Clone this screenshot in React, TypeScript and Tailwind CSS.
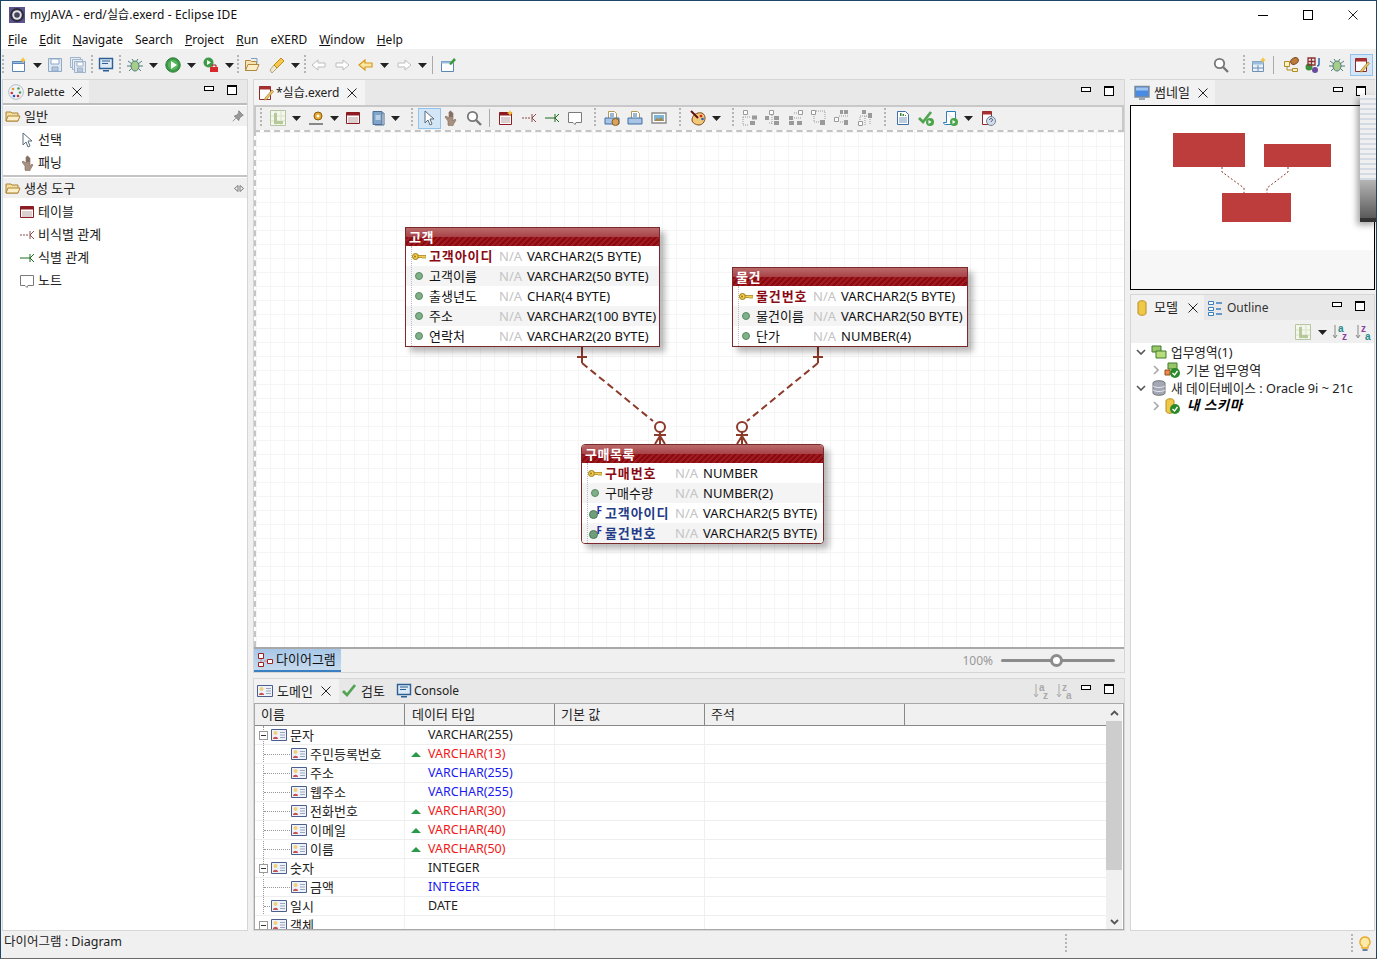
import type { ReactNode } from 'react'

const Dd = ({ className = '' }: { className?: string }) => (
    <svg width="9" height="5" viewBox="0 0 9 5" className={className}><path d="M0 0h9L4.5 5z" fill="#222" /></svg>
)
const Grip = ({ className = '' }: { className?: string }) => (
    <div className={`w-[2px] h-[20px] bg-[repeating-linear-gradient(180deg,#b5b5b5_0,#b5b5b5_2px,transparent_2px,transparent_4px)] ${className}`} />
)
const Ico = ({ className = '', children, s = 16 }: { className?: string; children: ReactNode; s?: number }) => (
    <svg width={s} height={s} viewBox="0 0 16 16" className={`shrink-0 ${className}`}>{children}</svg>
)

const CloseX = ({ className = '' }: { className?: string }) => (
    <svg width="10" height="10" viewBox="0 0 10 10" className={className}><path d="M.5.5l9 9M9.5.5l-9 9" stroke="#222" fill="none" /></svg>
)
const MinMax = ({ className = '' }: { className?: string }) => (
    <div className={`flex items-start gap-[13px] ${className}`}>
        <div className="w-[10px] h-[5px] border border-black bg-white mt-[1px]" />
        <div className="w-[10px] h-[10px] border border-black border-t-2 bg-white" />
    </div>
)

const NewFile = () => <Ico><path d="M1.5 4.5h12v10h-12z" fill="#fff" stroke="#5b87b8" /><path d="M1.5 4.5h12v2h-12z" fill="#9cbcdc" stroke="#5b87b8" /><path d="M12 0l1 2 2 1-2 1-1 2-1-2-2-1 2-1z" fill="#f3c53c" /></Ico>
const Save = ({ c = '#8fa9c9' }: { c?: string }) => <Ico><path d="M1.5 1.5h13v13h-13z" fill="#dfe8f2" stroke={c} /><path d="M4 2h8v5H4z" fill="#fff" stroke={c} /><path d="M5 10h6v4H5z" fill="#b8c8da" stroke={c} /></Ico>
const SaveAll = ({ c = '#9fb3cb' }: { c?: string }) => <Ico><path d="M.5.5h10v10H.5z" fill="#e8eef5" stroke={c} /><path d="M2.500 2.500h10v10h-10z" fill="#e8eef5" stroke={c} /><path d="M4.500 4.500h11v11h-11z" fill="#dfe8f2" stroke={c} /><path d="M7 5h6v4H7z" fill="#fff" stroke={c} /><path d="M7.500 11h5v4h-5z" fill="#b8c8da" stroke={c} /></Ico>
const Monitor = () => <Ico><path d="M1.5 1.5h13v10h-13z" fill="#dce9f5" stroke="#2b5f96" strokeWidth="1.4" /><path d="M4 4h8M4 6.5h6" stroke="#2b5f96" /><path d="M5 13h6v1.5H5z" fill="#2b5f96" /></Ico>
const ThumbI = () => <Ico><path d="M1 1.500h14v10.500H1z" fill="#4a8ae0" stroke="#7a8a9c" strokeWidth="1.400" /><path d="M2 2.500h12v3H2z" fill="#9cc4f0" /><path d="M5 13h6v2H5z" fill="#9aa6b4" /></Ico>
const Bug = () => <Ico><path d="M1 4l4 3M15 4l-4 3M0 9h4M12 9h4M2 14l3-3M14 14l-3-3M5 2l2 3M11 2L9 5" stroke="#4d7f78" fill="none" /><ellipse cx="8" cy="9" rx="4" ry="5" fill="#a8cc8c" stroke="#4d7f78" /></Ico>
const Run = () => <Ico><circle cx="8" cy="8" r="7.2" fill="#3f9a48" stroke="#2a7d3a" /><circle cx="8" cy="8" r="5" fill="#56b65c" /><path d="M6 4l6 4-6 4z" fill="#fff" /></Ico>
const Ext = () => <Ico><circle cx="5.5" cy="5.5" r="5" fill="#3f9a48" /><path d="M4 3l4 2.5L4 8z" fill="#fff" /><path d="M7 10h8v5H7z" fill="#d8282c" /><path d="M9 10V8h4v2" stroke="#a01a1a" fill="none" /></Ico>
const OpenF = () => <Ico><path d="M1.5 13.5v-10h5l1 1h5v9z" fill="#f6e2ae" stroke="#b08a3c" /><path d="M1.5 13.5l2.5-6h11l-2.5 6z" fill="#fbeec9" stroke="#b08a3c" /><path d="M7 1.5h6v5" fill="none" stroke="#7f9fbf" /></Ico>
const Torch = () => <Ico><path d="M1 13l4-5 3 3-5 5z" fill="#efe8d2" stroke="#b7a678" /><path d="M5 8l7-7 3 3-7 7z" fill="#f4c94c" stroke="#c08a18" /></Ico>
const Hollow = ({ flip = false }: { flip?: boolean }) => <Ico><path d={flip ? 'M15 8L9 3v3H2v4h7v3z' : 'M1 8l6-5v3h7v4H7v3z'} fill="#fff" stroke="#bdbdbd" /></Ico>
const ArrL = () => <Ico><path d="M1 8l6-5v3h7v4H7v3z" fill="#fbe7a8" stroke="#d79a1a" strokeWidth="1.2" /></Ico>
const Persp = () => <Ico><path d="M1.5 4.5h12v10h-12z" fill="#fff" stroke="#5b87b8" /><path d="M1.5 4.5h12v2h-12z" fill="#9cbcdc" /><path d="M9 7l5-6 2 2-5 5z" fill="#3a9a3a" /></Ico>
const Cursor = () => <Ico><path d="M3 1v12l3-3 2 5 2-1-2-5h4z" fill="#fff" stroke="#5a6b7c" /></Ico>
const Hand = () => <Ico><path d="M5 15v-4L2 7l1-1 3 2V2h1v5-6h1v6-5h1v5-4h1v8l2-2 1 1-3 5v4z" fill="#a89080" stroke="#7c6658" strokeWidth=".6" /></Ico>
const TableI = () => <Ico><path d="M1.5 2.5h13v11h-13z" fill="#fff" stroke="#8c1c22" /><path d="M1.5 2.5h13v3h-13z" fill="#8c1c22" /><path d="M3 8h10M3 10h10M3 12h10" stroke="#b7a0a0" /></Ico>
const NonId = () => <Ico><path d="M1 8h9" stroke="#8c4a4a" strokeDasharray="2 1" /><path d="M11 4v8M11 8l4-4M11 8l4 4" stroke="#8c4a4a" fill="none" /></Ico>
const IdRel = () => <Ico><path d="M1 8h10" stroke="#1e6a1e" /><path d="M11 4v8M11 8l4-4M11 8l4 4" stroke="#1e6a1e" fill="none" /></Ico>
const Note = () => <Ico><path d="M1.5 2.5h13v10H9l-1 2-2-2H1.5z" fill="#fff" stroke="#7a7a7a" /></Ico>
const PalIco = () => <Ico><circle cx="8" cy="8" r="7.4" fill="#eef2f6" stroke="#b4bfca" /><circle cx="5" cy="5" r="1.3" fill="#e0a030" /><circle cx="10.5" cy="4.5" r="1.3" fill="#52a052" /><circle cx="3.8" cy="9" r="1.3" fill="#c83030" /><circle cx="12" cy="8.5" r="1.3" fill="#52a052" /><circle cx="6" cy="12" r="1.3" fill="#3050c0" /><circle cx="10" cy="12" r="1.3" fill="#c83030" /></Ico>
const Folder = () => <Ico><path d="M1 13V4h5l1 1h6v8z" fill="#f3dca0" stroke="#ac8436" /><path d="M1 13l2-5h12l-2 5z" fill="#fbeec8" stroke="#ac8436" /></Ico>
const Pin = () => <Ico s={12}><path d="M9 1l6 6-2 1-3 3-1 3-6-6 3-1 3-3zM5 11l-4 4" fill="#999" stroke="#777" /></Ico>
const EditPage = () => <Ico><path d="M1.5 1.5h11v13h-11z" fill="#fff" stroke="#8c2a2a" /><path d="M1.5 1.5h11v3h-11z" fill="#a83030" /><path d="M7 13l7-8 1.5 1.5-7 8-2 .5z" fill="#ecc66a" stroke="#a67b2a" strokeWidth=".7" /></Ico>
const LGrid = ({ dim = true }: { dim?: boolean }) => <Ico><path d="M.5.5h15v15H.5z" fill="#f4f8ec" stroke={dim ? '#b6c5a4' : '#7e9a5c'} /><path d="M6 1v14M11 1v14M1 6h14M1 11h14" stroke="#d7e2c8" /><path d="M4 3h3v8h6v3H4z" fill="#b7c89b" /></Ico>
const GearI = () => <Ico><path d="M1 14h14" stroke="#666" strokeWidth="1.5" /><path d="M1 9h6v4H1z" fill="#eee" /><circle cx="10" cy="6" r="4" fill="#e6a92c" stroke="#8a5a14" /><circle cx="10" cy="6" r="1.5" fill="#fff" /></Ico>
const Book = () => <Ico><path d="M3 1.5h9v13H3z" fill="#7fa3c9" stroke="#4d6e92" /><path d="M5.5 5h5v5h-5z" fill="#b9d0e6" /><path d="M12 3h2v12H5v-1" fill="none" stroke="#4d6e92" /></Ico>
const Mag = ({ s = 16 }: { s?: number }) => <Ico s={s}><circle cx="6.5" cy="6.5" r="4.7" fill="#fff" stroke="#777" strokeWidth="1.8" /><path d="M10 10l5 5" stroke="#777" strokeWidth="2.4" /></Ico>
const TableNew = () => <Ico><path d="M1.5 2.5h12v12h-12z" fill="#fff" stroke="#8c1c22" /><path d="M1.5 2.5h12v3h-12z" fill="#8c1c22" /><path d="M3 8h9M3 10h9M3 12h9" stroke="#b7a0a0" /><path d="M12 0l1 2 2 1-2 1-1 2-1-2-2-1 2-1z" fill="#f3c53c" /></Ico>
const Printer = ({ gear = false }: { gear?: boolean }) => <Ico><path d="M4.5 1.5h6l2 2v5h-8z" fill="#fff" stroke="#b49a52" /><path d="M1 8h14v6H1z" fill="#a9c4e4" stroke="#3f6fa5" /><path d="M6 4h4M6 6h4" stroke="#3f6fa5" />{gear && <circle cx="11.5" cy="12" r="3.5" fill="#d9a35a" stroke="#8a5a24" />}</Ico>
const ImgI = () => <Ico><path d="M1 3h14v10H1z" fill="#fff" stroke="#8a8a8a" strokeWidth="1.4" /><path d="M3 5h10v6H3z" fill="#7ab6d9" /><path d="M3 11l3-3 2 1 2-2 3 4z" fill="#a58a50" /></Ico>
const Paint = () => <Ico><path d="M8 3c4-1 7 1 7 5s-3 7-6 7-7-2-7-5 2-6 6-7z" fill="#f0c878" stroke="#7a4a20" /><circle cx="11" cy="6" r="1.3" fill="#d02020" /><circle cx="12.5" cy="9" r="1.3" fill="#2060c0" /><path d="M1 1l7 7" stroke="#601010" strokeWidth="2" /></Ico>

// layout icons: hollow boxes, solid boxes, dotted links
const layouts: { h: string; f: string; d: string }[] = [
    { h: 'M1.500 .500h4v4h-4z', f: 'M10 5.500h5v4h-5zM8 11h5v4H8z', d: 'M1 7v8h6M1 7h8' },
    { h: 'M5.500 .500h4v4h-4z', f: 'M1 6h4v4H1zM10 6h5v4h-5zM10 11h5v4h-5z', d: 'M8 5v10M5 13h4' },
    { h: 'M10.500 .500h4v4h-4z', f: 'M1 6h4v4H1zM1 11h5v4H1zM9 11h5v4H9z', d: 'M6 3h4M6 8h8' },
    { h: 'M.500 .500h4v4h-4z', f: 'M10 1h0M9 10h5v5H9z', d: 'M5 1h9v8M3 6v6h5' },
    { h: 'M.500 7.500h4v4h-4z', f: 'M6 0h3v4H6zM10 0h4v4h-4zM10 10h4v5h-4z', d: 'M5 6h9M6 12h3' },
    { h: 'M1.500 11.500h4v4h-4z', f: 'M5 0h4v4H5zM11 3h4v5h-4z', d: 'M3 10V6h8M8 6v9M13 9v6' },
]
const Lay = ({ v = 0 }: { v?: number }) => (
    <Ico>
        <path d={layouts[v].h} fill="#fff" stroke="#9a9a9a" />
        <path d={layouts[v].f} fill="#9a9a9a" />
        <path d={layouts[v].d} stroke="#9a9a9a" strokeDasharray="1 1" fill="none" />
    </Ico>
)
const Report = () => <Ico><path d="M2.5 1.5h8l3 3v10h-11z" fill="#fff" stroke="#3f6fa5" /><path d="M5 6V3h1.5v3zM7.5 6V4H9v2zM10 6V5h1v1z" fill="#3a8a3a" /><path d="M4 8h8M4 10h8M4 12h8" stroke="#7a9cc0" /></Ico>
const Check = ({ run = true }: { run?: boolean }) => <Ico><path d="M1 8l4 4 8-10" stroke="#52a452" strokeWidth="2.8" fill="none" />{run && <><circle cx="12" cy="12" r="4" fill="#4aa54a" /><path d="M10.5 10l3 2-3 2z" fill="#fff" /></>}</Ico>
const Script = () => <Ico><path d="M4.5 1.5h9v8M4.5 1.5v11h-3c0 2 2 2 2 2h7" fill="#fff" stroke="#2a7fb8" /><circle cx="12" cy="12" r="4" fill="#4aa54a" /><path d="M10.5 10l3 2-3 2z" fill="#fff" /></Ico>
const HelpP = () => <Ico><path d="M2.5 1.5h9v13h-9z" fill="#fff" stroke="#8c2a2a" /><path d="M2.5 1.5h9v3h-9z" fill="#a83030" /><circle cx="11" cy="11" r="4.5" fill="#d4dde8" stroke="#6f859c" /><path d="M9.5 10c0-2 3-2 3 0 0 1-1.500 1-1.500 2" stroke="#34526f" fill="none" /></Ico>
const TileAdd = () => <Ico><path d="M2.5 4.5h11v10h-11z" fill="#e8f0f8" stroke="#6f8fb3" /><path d="M2.500 4.500h11v3h-11z" fill="#9dbcdc" /><path d="M8 8v6M3 11h10" stroke="#6f8fb3" /><path d="M13 0l1 2 2 1-2 1-1 2-1-2-2-1 2-1z" fill="#f3c53c" /></Ico>
const HierP = () => <Ico><path d="M1.500 4.500h5v5h-5zM9.500 11.500h5v3h-5z" fill="#fdf3c0" stroke="#b08a2c" /><path d="M4 10v3h5" stroke="#b08a2c" fill="none" /><ellipse cx="11.500" cy="4" rx="4" ry="3" fill="#c07a3c" stroke="#7a4a1c" transform="rotate(-30 11.500 4)" /></Ico>
const JavaP = () => <Ico><circle cx="4" cy="10" r="3.500" fill="#3c8f3c" /><circle cx="10" cy="13" r="3" fill="#6a4a9c" /><path d="M3 1h7v7H3zM6.500 1v7M3 4.500h7" fill="none" stroke="#8c3030" strokeWidth="1.300" /><path d="M14 1v6c0 1-1 2-2 2" stroke="#2a6ab0" fill="none" strokeWidth="1.500" /></Ico>
const SortAz = ({ rev = false, dim = false }: { rev?: boolean; dim?: boolean }) => (
    <svg width="17" height="17" viewBox="0 0 17 17" className="shrink-0 font-['Liberation_Sans',sans-serif] font-bold">
        <path d="M3 1v12M1 11l2 3 2-3" stroke={dim ? '#aaa' : '#888'} fill="none" />
        <text x="6" y="8" fontSize="10" fill={dim ? '#aaa' : rev ? '#8c3fa0' : '#2a8a8a'}>{rev ? 'z' : 'a'}</text>
        <text x="10" y="16" fontSize="10" fill={dim ? '#aaa' : rev ? '#2a8a8a' : '#8c3fa0'}>{rev ? 'a' : 'z'}</text>
    </svg>
)
const DomainI = ({ className = '' }: { className?: string }) => (
    <svg width="16" height="12" viewBox="0 0 16 12" className={`shrink-0 ${className}`}>
        <path d="M.5.5h15v11H.5z" fill="#eef2fa" stroke="#4c5f8c" />
        <circle cx="4.500" cy="4" r="2" fill="#f3cf78" />
        <path d="M2 10c0-3 5-3 5 0z" fill="#c85050" />
        <path d="M9 3.500h5M9 6h5M9 8.500h5" stroke="#9aa6bc" />
    </svg>
)
const KeyI = () => <svg width="14" height="9" viewBox="0 0 14 9" className="shrink-0"><circle cx="3.500" cy="4.500" r="3" fill="#f0cc50" stroke="#9a7a10" /><path d="M6 3.500h8v2l-1 1-1-1-1 1-1-1H6z" fill="#f0cc50" stroke="#9a7a10" strokeWidth=".7" /><circle cx="3" cy="4.500" r="1" fill="#9a7a10" /></svg>
const Dot = () => <div className="w-[8px] h-[8px] rounded-full bg-[#7fb088] border border-[#5a8a64]" />
const FkI = () => (
    <div className="relative w-[12px] h-[12px]">
        <div className="absolute left-0 bottom-0 w-[9px] h-[9px] rounded-full bg-[#6f9f78] border border-[#4a7a58]" />
        <span className="absolute right-[-1px] top-[-3px] text-[10px] font-bold text-[#2a2a9c] leading-[12px]">F</span>
    </div>
)

type Row = { k?: 'pk' | 'fk'; n: string; t: string }

function ErTable({ title, rows, pos, name, rounded = false }: { title: string; rows: Row[]; pos: string; name: string; rounded?: boolean }) {
    return (
        <div className={`absolute ${pos} border border-[#7a2a2a] bg-white shadow-[5px_5px_6px_rgba(0,0,0,0.28)] overflow-hidden ${rounded ? 'rounded-[4px]' : ''}`}>
            <div className="relative h-[18px]">
                <div className="h-[9px] bg-[linear-gradient(180deg,#b96a6a,#a84248)]" />
                <div className="h-[9px] bg-[repeating-linear-gradient(135deg,#8a0a10_0,#8a0a10_2px,#9c1c22_2px,#9c1c22_4px)]" />
                <span className="absolute left-[3px] top-0 text-white font-bold text-[13px] leading-[19px] tracking-[0.5px]">{title}</span>
            </div>
            <div className="absolute left-[5px] top-[18px] bottom-0 border-l border-dotted border-[#bbb]" />
            {rows.map((r, i) => (
                <div key={r.n} className={`flex items-center h-[20px] whitespace-nowrap text-[13px] ${i % 2 ? 'bg-[#f4f4f4]' : 'bg-white'}`}>
                    <div className="w-[23px] flex justify-center pl-[3px] shrink-0">{r.k === 'pk' ? <KeyI /> : r.k === 'fk' ? <FkI /> : <Dot />}</div>
                    <span className={`${name} ${r.k === 'pk' ? 'font-bold text-[#8a0a14] tracking-[0.9px]' : r.k === 'fk' ? 'font-bold text-[#1f3c88] tracking-[0.9px]' : 'text-[#111]'}`}>{r.n}</span>
                    <span className="w-[28px] text-[#c4c4c4]">N/A</span>
                    <span className="text-[#111]">{r.t}</span>
                </div>
            ))}
        </div>
    )
}

const domainRows = [
    { n: '문자', t: 'VARCHAR(255)', l: 0, c: 'text-[#222]' },
    { n: '주민등록번호', t: 'VARCHAR(13)', l: 1, c: 'text-[#f01818]', up: true },
    { n: '주소', t: 'VARCHAR(255)', l: 1, c: 'text-[#1a1af0]' },
    { n: '웹주소', t: 'VARCHAR(255)', l: 1, c: 'text-[#1a1af0]' },
    { n: '전화번호', t: 'VARCHAR(30)', l: 1, c: 'text-[#f01818]', up: true },
    { n: '이메일', t: 'VARCHAR(40)', l: 1, c: 'text-[#f01818]', up: true },
    { n: '이름', t: 'VARCHAR(50)', l: 1, c: 'text-[#f01818]', up: true },
    { n: '숫자', t: 'INTEGER', l: 0, c: 'text-[#222]' },
    { n: '금액', t: 'INTEGER', l: 1, c: 'text-[#1a1af0]' },
    { n: '일시', t: 'DATE', l: 2, c: 'text-[#222]' },
    { n: '객체', t: '', l: 0, c: 'text-[#222]' },
]

const Expander = () => (
    <div className="w-[9px] h-[9px] border border-[#999] bg-white flex items-center justify-center"><div className="w-[5px] h-px bg-[#333]" /></div>
)

export default function App() {
    return (
        <div className="w-[1377px] h-[959px] overflow-hidden relative flex flex-col bg-[#f0f0f0] border border-[#1d4668] border-b-[#6a6a6a] font-['Noto_Sans','Noto_Sans_CJK_KR',sans-serif] text-[12px] text-[#222] leading-none">
            {/* Title */}
            <div className="h-[28px] bg-white flex items-center shrink-0">
                <svg width="16" height="16" viewBox="0 0 16 16" className="ml-[8px]">
                    <path d="M0 0h16v16H0z" fill="#5b5490" />
                    <circle cx="8" cy="8" r="7" fill="#2e2e3a" />
                    <circle cx="8" cy="8" r="4.800" fill="#e2e2ea" />
                    <circle cx="8" cy="8" r="2.800" fill="#44445a" />
                </svg>
                <span className="ml-[5px] text-[#111] tracking-[0.1px]">myJAVA - erd/실습.exerd - Eclipse IDE</span>
                <div className="ml-auto flex items-center">
                    <div className="w-[10px] h-px bg-black mr-[35px]" />
                    <div className="w-[10px] h-[10px] border border-black mr-[35px]" />
                    <CloseX className="mr-[18px]" />
                </div>
            </div>
            {/* Menu */}
            <div className="h-[20px] bg-white flex items-center pl-[7px] pt-[2px] gap-[12px] shrink-0 text-[#111]">
                {[['F', 'ile'], ['E', 'dit'], ['N', 'avigate'], ['', 'Search'], ['P', 'roject'], ['R', 'un'], ['', 'eXERD'], ['W', 'indow'], ['H', 'elp']].map(([u, r]) => (
                    <span key={r}><span className="underline">{u}</span>{r}</span>
                ))}
            </div>
            {/* Main toolbar */}
            <div className="h-[30px] flex items-center shrink-0 relative pt-[2px]">
                <Grip className="ml-[1px]" />
                <div className="ml-[7px]"><NewFile /></div>
                <Dd className="ml-[6px]" />
                <div className="ml-[5px]"><Save /></div>
                <div className="ml-[7px]"><SaveAll /></div>
                <Grip className="ml-[5px]" />
                <div className="ml-[5px]"><Monitor /></div>
                <Grip className="ml-[5px]" />
                <div className="ml-[6px]"><Bug /></div>
                <Dd className="ml-[6px]" />
                <div className="ml-[7px]"><Run /></div>
                <Dd className="ml-[6px]" />
                <div className="ml-[7px]"><Ext /></div>
                <Dd className="ml-[6px]" />
                <Grip className="ml-[3px]" />
                <div className="ml-[5px]"><OpenF /></div>
                <div className="ml-[9px]"><Torch /></div>
                <Dd className="ml-[6px]" />
                <Grip className="ml-[4px]" />
                <div className="ml-[5px]"><Hollow /></div>
                <div className="ml-[7px]"><Hollow flip /></div>
                <div className="ml-[8px]"><ArrL /></div>
                <Dd className="ml-[6px]" />
                <div className="ml-[7px]"><Hollow flip /></div>
                <Dd className="ml-[6px]" />
                <div className="w-px h-[18px] bg-[#aaa] ml-[5px]" />
                <div className="ml-[7px]"><Persp /></div>
                <div className="ml-auto flex items-center mr-[3px]">
                    <Mag />
                    <Grip className="ml-[14px]" />
                    <div className="ml-[5px]"><TileAdd /></div>
                    <div className="w-px h-[18px] bg-[#aaa] ml-[7px]" />
                    <div className="ml-[9px]"><HierP /></div>
                    <div className="ml-[6px]"><JavaP /></div>
                    <div className="ml-[8px]"><Bug /></div>
                    <div className="ml-[5px] w-[23px] h-[22px] bg-[#d4e6f6] border border-[#90c4ee] flex items-center justify-center"><EditPage /></div>
                </div>
            </div>

            {/* Workbench */}
            <div className="flex-1 min-h-0 flex pl-[1px] pr-[1px] gap-[5px]">
                {/* Palette */}
                <div className="w-[246px] border border-[#d6d6d6] bg-white flex flex-col shrink-0">
                    <div className="h-[25px] bg-[#e8e8e8] flex items-center border-b-2 border-[#bcbcbc] shrink-0">
                        <div className="w-[86px] h-full bg-[#f2f2f2] flex items-center pl-[5px]">
                            <PalIco />
                            <span className="ml-[3px] text-[11.5px]">Palette</span>
                            <CloseX className="ml-[7px]" />
                        </div>
                        <MinMax className="ml-auto mr-[10px] -mt-[4px]" />
                    </div>
                    <div className="h-[20px] mt-[1px] bg-[#f0f0f0] flex items-center pl-[2px] shrink-0">
                        <Folder /><span className="ml-[3px] text-[13px]">일반</span>
                        <div className="ml-auto mr-[3px]"><Pin /></div>
                    </div>
                    <div className="h-[51px] border-b-2 border-[#c4c4c4] shrink-0 flex flex-col pt-[2px]">
                        <div className="h-[23px] flex items-center pl-[17px]"><Cursor /><span className="ml-[2px] text-[13px] text-[#222]">선택</span></div>
                        <div className="h-[23px] flex items-center pl-[17px]"><Hand /><span className="ml-[2px] text-[13px] text-[#222]">패닝</span></div>
                    </div>
                    <div className="h-[20px] bg-[#f0f0f0] flex items-center pl-[2px] mt-[1px] shrink-0">
                        <Folder /><span className="ml-[3px] text-[13px]">생성 도구</span>
                        <svg width="10" height="7" viewBox="0 0 10 7" className="ml-auto mr-[3px]"><path d="M4 .5L.5 3.500 4 6.500zM6 .5l3.500 3L6 6.500z" fill="none" stroke="#777" /></svg>
                    </div>
                    <div className="flex flex-col pt-[2px]">
                        {[[<TableI key="a" />, '테이블'], [<NonId key="b" />, '비식별 관계'], [<IdRel key="c" />, '식별 관계'], [<Note key="d" />, '노트']].map(([ic, t], i) => (
                            <div key={i} className="h-[23px] flex items-center pl-[16px]">{ic}<span className="ml-[3px] text-[13px]">{t}</span></div>
                        ))}
                    </div>
                </div>

                {/* Center column */}
                <div className="w-[872px] flex flex-col shrink-0">
                    <div className="h-[594px] flex flex-col border border-[#d6d6d6] shrink-0">
                        <div className="h-[25px] bg-[#e8e8e8] flex items-center shrink-0">
                            <div className="w-[111px] h-full bg-[#f4f4f4] flex items-center pl-[4px]">
                                <EditPage />
                                <span className="ml-[2px]">*실습.exerd</span>
                                <CloseX className="ml-[8px]" />
                            </div>
                            <MinMax className="ml-auto mr-[10px] -mt-[4px]" />
                        </div>
                        <div className="h-[25px] flex items-center border-2 border-[#c8c8c8] border-b-0 bg-[#f0f0f0] shrink-0 pb-[1px]">
                            <Grip className="ml-[4px]" />
                            <div className="ml-[8px]"><LGrid /></div>
                            <Dd className="ml-[6px]" />
                            <div className="ml-[7px]"><GearI /></div>
                            <Dd className="ml-[6px]" />
                            <div className="ml-[6px]"><TableI /></div>
                            <div className="ml-[9px]"><Book /></div>
                            <Dd className="ml-[5px]" />
                            <Grip className="ml-[11px]" />
                            <div className="ml-[5px] w-[23px] h-[21px] bg-[#d4e6f6] border border-[#90c4ee] flex items-center justify-center"><Cursor /></div>
                            <div className="ml-[2px]"><Hand /></div>
                            <div className="ml-[7px]"><Mag /></div>
                            <div className="w-px h-[18px] bg-[#aaa] ml-[7px]" />
                            <div className="ml-[8px]"><TableNew /></div>
                            <div className="ml-[7px]"><NonId /></div>
                            <div className="ml-[7px]"><IdRel /></div>
                            <div className="ml-[7px]"><Note /></div>
                            <Grip className="ml-[11px]" />
                            <div className="ml-[8px]"><Printer gear /></div>
                            <div className="ml-[7px]"><Printer /></div>
                            <div className="ml-[8px]"><ImgI /></div>
                            <Grip className="ml-[12px]" />
                            <div className="ml-[9px]"><Paint /></div>
                            <Dd className="ml-[6px]" />
                            <Grip className="ml-[11px]" />
                            <div className="ml-[8px]"><Lay v={0} /></div>
                            <div className="ml-[6px]"><Lay v={1} /></div>
                            <div className="ml-[8px]"><Lay v={2} /></div>
                            <div className="ml-[7px]"><Lay v={3} /></div>
                            <div className="ml-[7px]"><Lay v={4} /></div>
                            <div className="ml-[7px]"><Lay v={5} /></div>
                            <Grip className="ml-[11px]" />
                            <div className="ml-[9px]"><Report /></div>
                            <div className="ml-[7px]"><Check /></div>
                            <div className="ml-[8px]"><Script /></div>
                            <Dd className="ml-[6px]" />
                            <div className="ml-[7px]"><HelpP /></div>
                        </div>
                        {/* Canvas */}
                        <div className="relative flex-1 min-h-0 overflow-hidden bg-white border-t-2 border-l-2 border-dashed border-[#c4c4c4] bg-[linear-gradient(#f5f5f5_1px,transparent_1px),linear-gradient(90deg,#f5f5f5_1px,transparent_1px)] bg-[size:14px_14px]">
                            <svg width="870" height="514" viewBox="253 132 870 514" className="absolute left-[-3px] top-[-1px]">
                                <g stroke="#8c3a2a" fill="none" strokeWidth="2">
                                    <path d="M582 348v16M577 358h10M818 348v16M813 358h10" />
                                    <path d="M582 364l71 58M818 364l-71 58" strokeDasharray="7 4" />
                                    <circle cx="660" cy="428" r="5" />
                                    <circle cx="742" cy="428" r="5" />
                                    <path d="M660 433v12M654 436h12M660 437l-5 8M660 437l5 8M742 433v12M736 436h12M742 437l-5 8M742 437l5 8" />
                                </g>
                            </svg>
                            <ErTable
                                title="고객" pos="left-[149px] top-[95px] w-[255px]" name="w-[70px]"
                                rows={[
                                    { k: 'pk', n: '고객아이디', t: 'VARCHAR2(5 BYTE)' },
                                    { n: '고객이름', t: 'VARCHAR2(50 BYTE)' },
                                    { n: '출생년도', t: 'CHAR(4 BYTE)' },
                                    { n: '주소', t: 'VARCHAR2(100 BYTE)' },
                                    { n: '연락처', t: 'VARCHAR2(20 BYTE)' },
                                ]}
                            />
                            <ErTable
                                title="물건" pos="left-[476px] top-[135px] w-[236px]" name="w-[57px]"
                                rows={[
                                    { k: 'pk', n: '물건번호', t: 'VARCHAR2(5 BYTE)' },
                                    { n: '물건이름', t: 'VARCHAR2(50 BYTE)' },
                                    { n: '단가', t: 'NUMBER(4)' },
                                ]}
                            />
                            <ErTable
                                title="구매목록" pos="left-[325px] top-[312px] w-[243px]" name="w-[70px]" rounded
                                rows={[
                                    { k: 'pk', n: '구매번호', t: 'NUMBER' },
                                    { n: '구매수량', t: 'NUMBER(2)' },
                                    { k: 'fk', n: '고객아이디', t: 'VARCHAR2(5 BYTE)' },
                                    { k: 'fk', n: '물건번호', t: 'VARCHAR2(5 BYTE)' },
                                ]}
                            />
                        </div>
                        {/* Zoom bar */}
                        <div className="h-[25px] flex items-center border-t-2 border-[#a8a8a8] bg-[#f0f0f0] shrink-0">
                            <div className="w-[87px] h-[23px] bg-[linear-gradient(180deg,#a7c7e8,#c6daee)] border-b-2 border-[#3a7fc0] flex items-center pl-[3px]">
                                <Ico><path d="M1.500 1.500h5v5h-5zM1.500 10.500h5v4h-5zM10.500 7.500h5v4h-5z" fill="#fff" stroke="#a02020" /><path d="M4 7v3M7 9h3" stroke="#d08080" /></Ico>
                                <span className="ml-[3px] text-[13px] text-[#111]">다이어그램</span>
                            </div>
                            <span className="ml-auto text-[#999]">100%</span>
                            <div className="relative w-[114px] h-[3px] bg-[#8c8c8c] rounded-full ml-[8px] mr-[9px]">
                                <div className="absolute left-[49px] top-[-5px] w-[13px] h-[13px] rounded-full bg-white border-[3px] border-[#8c8c8c]" />
                            </div>
                        </div>
                    </div>
                    {/* Domain view */}
                    <div className="mt-[5px] h-[253px] flex flex-col border border-[#d6d6d6] shrink-0">
                        <div className="h-[25px] bg-[#e8e8e8] flex items-center border-b border-[#a8a8a8] shrink-0">
                            <div className="w-[85px] h-full bg-[#f2f2f2] flex items-center pl-[3px]">
                                <DomainI />
                                <span className="ml-[4px] text-[13px]">도메인</span>
                                <CloseX className="ml-[8px]" />
                            </div>
                            <div className="ml-[3px]"><Check run={false} /></div>
                            <span className="ml-[3px] text-[13px]">검토</span>
                            <div className="ml-[11px]"><Monitor /></div>
                            <span className="ml-[2px]">Console</span>
                            <div className="ml-auto flex items-center gap-[6px] mr-[10px]">
                                <SortAz dim /><SortAz dim rev />
                                <MinMax className="ml-[2px] -mt-[4px]" />
                            </div>
                        </div>
                        <div className="flex-1 min-h-0 flex border border-[#a8a8a8] border-t-0 bg-white">
                            <div className="flex-1 min-w-0 flex flex-col overflow-hidden">
                                <div className="h-[22px] flex bg-[#f0f0f0] border-b border-[#888] shrink-0">
                                    <div className="w-[150px] border-r border-[#888] flex items-center pl-[6px] text-[13px]">이름</div>
                                    <div className="w-[150px] border-r border-[#888] flex items-center pl-[7px] text-[13px]">데이터 타입</div>
                                    <div className="w-[150px] border-r border-[#888] flex items-center pl-[6px] text-[13px]">기본 값</div>
                                    <div className="w-[200px] border-r border-[#888] flex items-center pl-[6px] text-[13px]">주석</div>
                                </div>
                                <div className="relative">
                                    <div className="absolute left-[8px] top-0 h-[190px] border-l border-dotted border-[#999]" />
                                    {domainRows.map((r, i) => (
                                        <div key={i} className="h-[19px] flex border-b border-[#eeeeee] whitespace-nowrap relative">
                                            <div className="w-[150px] border-r border-[#f0f0f0] flex items-center shrink-0">
                                                {r.l === 0 && <div className="ml-[4px]"><Expander /></div>}
                                                {r.l === 0 && <DomainI className="ml-[3px]" />}
                                                {r.l === 2 && <div className="ml-[9px] w-[6px] border-t border-dotted border-[#999]" />}
                                                {r.l === 2 && <DomainI className="ml-[1px]" />}
                                                {r.l === 1 && <div className="ml-[9px] w-[26px] border-t border-dotted border-[#999]" />}
                                                {r.l === 1 && <DomainI className="ml-[1px]" />}
                                                <span className="ml-[3px] text-[13px]">{r.n}</span>
                                            </div>
                                            <div className="w-[150px] border-r border-[#f0f0f0] flex items-center shrink-0">
                                                <div className="w-[23px] flex justify-end pr-[7px]">
                                                    {r.up && <div className="w-0 h-0 border-l-[5px] border-r-[5px] border-b-[5px] border-l-transparent border-r-transparent border-b-[#2a9a4a]" />}
                                                </div>
                                                <span className={`text-[12.5px] ${r.c}`}>{r.t}</span>
                                            </div>
                                            <div className="w-[150px] border-r border-[#f0f0f0] shrink-0" />
                                        </div>
                                    ))}
                                </div>
                            </div>
                            {/* Scrollbar */}
                            <div className="w-[16px] flex flex-col bg-[#f0f0f0] items-center shrink-0 mr-[1px]">
                                <svg width="9" height="6" viewBox="0 0 9 6" className="mt-[6px]"><path d="M1 5l3.500-3.500L8 5" stroke="#555" strokeWidth="1.800" fill="none" /></svg>
                                <div className="w-full h-[149px] bg-[#cdcdcd] mt-[5px]" />
                                <svg width="9" height="6" viewBox="0 0 9 6" className="mt-auto mb-[4px]"><path d="M1 1l3.500 3.500L8 1" stroke="#555" strokeWidth="1.800" fill="none" /></svg>
                            </div>
                        </div>
                    </div>
                </div>

                {/* Right column */}
                <div className="flex-1 min-w-0 flex flex-col">
                    <div className="h-[211px] flex flex-col shrink-0 relative">
                        <div className="h-[26px] bg-[#e8e8e8] flex items-center shrink-0 border-t border-[#d6d6d6]">
                            <div className="w-[85px] h-full bg-[#f2f2f2] flex items-center pl-[4px]">
                                <ThumbI />
                                <span className="ml-[4px] text-[13px]">썸네일</span>
                                <CloseX className="ml-[8px]" />
                            </div>
                            <MinMax className="ml-auto mr-[9px] -mt-[4px]" />
                        </div>
                        <div className="h-[185px] border border-black bg-white flex flex-col shrink-0 overflow-hidden">
                            <div className="h-[144px] shrink-0 relative">
                                <div className="absolute left-[42px] top-[27px] w-[72px] h-[34px] bg-[#bd3d3d]" />
                                <div className="absolute left-[133px] top-[38px] w-[67px] h-[23px] bg-[#bd3d3d]" />
                                <div className="absolute left-[91px] top-[87px] w-[69px] h-[29px] bg-[#bd3d3d]" />
                                <svg width="245" height="144" className="absolute left-0 top-0">
                                    <path d="M91 61v5l22 16v5M157 61v5l-21 16v5" stroke="#8c3a2a" strokeDasharray="2 2" fill="none" />
                                </svg>
                            </div>
                            <div className="flex-1 bg-[#f7f7f7]" />
                        </div>
                        {/* stray window preview lying over the view */}
                        <div className="absolute right-[-3px] top-[16px] w-[18px] h-[127px] shadow-[-3px_3px_6px_rgba(0,0,0,0.35)] bg-white flex flex-col overflow-hidden">
                            <div className="flex-1 bg-[repeating-linear-gradient(180deg,#f0f0f0_0,#f0f0f0_3px,#d4dbe4_3px,#d4dbe4_5px)]" />
                            <div className="h-[42px] bg-[linear-gradient(180deg,#b5b5b5,#5a5a5a)] border-b-4 border-[#333]" />
                        </div>
                    </div>
                    <div className="mt-[4px] flex-1 min-h-0 border border-[#d6d6d6] bg-white flex flex-col">
                        <div className="h-[25px] bg-[#e8e8e8] flex items-center shrink-0">
                            <div className="w-[73px] h-full bg-[#f2f2f2] flex items-center pl-[4px]">
                                <Ico><path d="M3 3c0-3 8-3 8 0v10c0 3-8 3-8 0z" fill="#f0c848" stroke="#b88c1c" /></Ico>
                                <span className="ml-[3px] text-[13px]">모델</span>
                                <CloseX className="ml-[10px]" />
                            </div>
                            <div className="ml-[3px]">
                                <Ico><path d="M1.500 1.500h5v3h-5zM1.500 7.500h5v3h-5zM1.500 12.500h5v3h-5z" fill="#fff" stroke="#3a7fc0" /><path d="M9 3h6M9 9h5M9 14h6" stroke="#3a7fc0" strokeWidth="1.400" /></Ico>
                            </div>
                            <span className="ml-[4px] text-[#333]">Outline</span>
                            <MinMax className="ml-auto mr-[9px] -mt-[4px]" />
                        </div>
                        <div className="h-[23px] bg-[#f0f0f0] flex items-center justify-end gap-[5px] pr-[2px] pt-[1px] shrink-0">
                            <LGrid />
                            <Dd className="ml-[2px]" />
                            <SortAz />
                            <div className="ml-[1px]"><SortAz rev /></div>
                        </div>
                        <div className="flex flex-col text-[#222]">
                            <div className="h-[18px] flex items-center pl-[5px]">
                                <svg width="10" height="6" viewBox="0 0 10 6"><path d="M1 1l4 4 4-4" stroke="#555" strokeWidth="1.600" fill="none" /></svg>
                                <div className="ml-[5px]"><Ico><path d="M1 2h9v6H1z" fill="#9ac66a" stroke="#3f7a2a" /><path d="M5 7h10v7H5z" fill="#b8dc7c" stroke="#3f7a2a" /></Ico></div>
                                <span className="ml-[4px] text-[12.7px]">업무영역(1)</span>
                            </div>
                            <div className="h-[18px] flex items-center pl-[22px]">
                                <svg width="6" height="10" viewBox="0 0 6 10"><path d="M1 1l4 4-4 4" stroke="#aaa" strokeWidth="1.600" fill="none" /></svg>
                                <div className="ml-[5px]"><Ico><path d="M4 1h9v6H4z" fill="#9ac66a" stroke="#3f7a2a" /><path d="M1 8h5v5H1z" fill="#e88a4a" stroke="#9c4a1c" /><circle cx="11" cy="11" r="5" fill="#2a8a2a" /><path d="M8.500 11l2 2 3-4" stroke="#fff" fill="none" strokeWidth="1.300" /></Ico></div>
                                <span className="ml-[6px] text-[13px]">기본 업무영역</span>
                            </div>
                            <div className="h-[18px] flex items-center pl-[5px]">
                                <svg width="10" height="6" viewBox="0 0 10 6"><path d="M1 1l4 4 4-4" stroke="#555" strokeWidth="1.600" fill="none" /></svg>
                                <div className="ml-[5px]"><Ico><path d="M2 3c0-3 12-3 12 0v10c0 3-12 3-12 0z" fill="#a4a8b4" stroke="#70747f" /><path d="M2 6c3 2 9 2 12 0M2 10c3 2 9 2 12 0" stroke="#e8e8ee" fill="none" /></Ico></div>
                                <span className="ml-[4px] text-[12.7px]">새 데이터베이스 : Oracle 9i ~ 21c</span>
                            </div>
                            <div className="h-[18px] flex items-center pl-[22px]">
                                <svg width="6" height="10" viewBox="0 0 6 10"><path d="M1 1l4 4-4 4" stroke="#aaa" strokeWidth="1.600" fill="none" /></svg>
                                <div className="ml-[5px]"><Ico><path d="M2 3c0-3 8-3 8 0v10c0 3-8 3-8 0z" fill="#f0c848" stroke="#b88c1c" /><circle cx="11" cy="11" r="5" fill="#2a8a2a" /><path d="M8.500 11l2 2 3-4" stroke="#fff" fill="none" strokeWidth="1.300" /></Ico></div>
                                <span className="ml-[7px] text-[13.5px] tracking-[0.5px] font-bold italic text-black">내 스키마</span>
                            </div>
                        </div>
                    </div>
                </div>
            </div>

            {/* Status bar */}
            <div className="h-[27px] flex items-center shrink-0 pl-[3px] pb-[4px] relative">
                <span className="text-[12.5px]">다이어그램 : Diagram</span>
                <Grip className="ml-[943px] h-[14px] mt-[3px]" />
                <Grip className="ml-[284px] h-[14px] mt-[3px]" />
                <svg width="14" height="16" viewBox="0 0 14 16" className="ml-[5px] mt-[3px]"><path d="M7 1a5 5 0 0 0-3 9v2h6v-2a5 5 0 0 0-3-9z" fill="#fde9a8" stroke="#eaaa2a" strokeWidth="1.400" /><path d="M4.500 13h5v2h-5z" fill="#6a7f9c" /></svg>
            </div>
        </div>
    )
}
